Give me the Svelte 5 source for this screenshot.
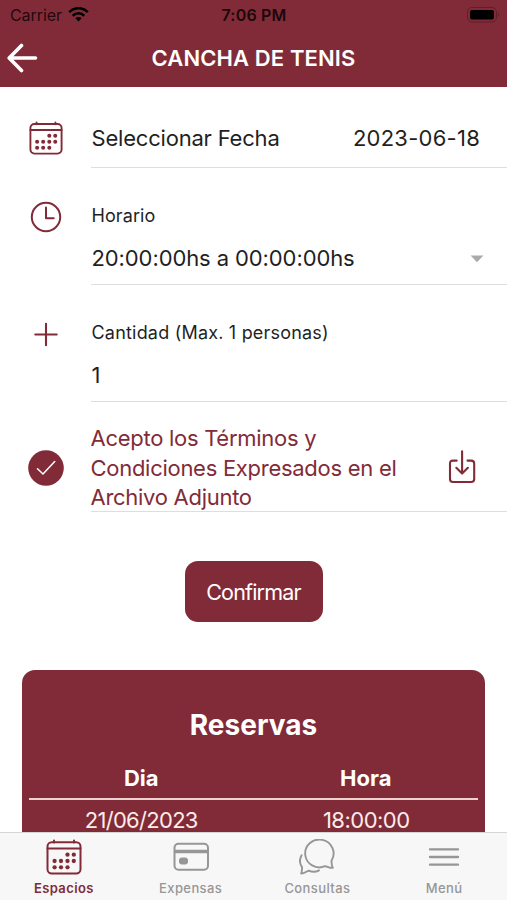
<script>
  const reservas = [{ dia: '21/06/2023', hora: '18:00:00' }];
</script>

{#snippet calendar()}
  <svg class="calendar" viewBox="0 0 36 36" fill="none" stroke="currentColor" stroke-width="2">
    <rect x="1.5" y="3.2" width="33" height="31.3" rx="4.2" />
    <path d="M1.5 9.5H34.5M8 1.5V3.5M28 1.5V3.5" stroke-linecap="round" />
    <g fill="currentColor" stroke="none">
      {#each [[21.5, 15.7], [27.8, 15.7], [8.6, 22], [15, 22], [21.5, 22], [27.8, 22], [8.6, 28.3], [15, 28.3], [21.5, 28.3]] as [x, y]}
        <circle cx={x} cy={y} r="2.15" />
      {/each}
    </g>
  </svg>
{/snippet}

<div class="screen">
  <div class="status">
    <div class="carrier">
      <span>Carrier</span>
      <svg width="21" height="15" viewBox="0 0 21 15" fill="none" stroke="#000" stroke-width="2.6">
        <path d="M1.2 5.1C6.4-.1 14.6-.1 19.8 5.1" />
        <path d="M4.7 8.7C8 5.5 13 5.5 16.3 8.7" />
        <path d="M7.4 11.3C9.2 9.5 11.8 9.5 13.6 11.3L10.5 14.4Z" fill="#000" stroke="none" />
      </svg>
    </div>
    <span class="time">7:06 PM</span>
    <svg class="battery" width="34" height="16" viewBox="0 0 34 16">
      <rect x=".5" y=".5" width="29" height="14.5" rx="4.5" fill="none" stroke="#5e1f2a" />
      <rect x="3" y="3" width="24" height="9.5" rx="2" />
      <path d="M31.2 5.5Q33.4 7.8 31.2 10.1Z" fill="#5e1f2a" />
    </svg>
  </div>

  <header>
    <svg class="back" width="32" height="30" viewBox="0 0 32 30" fill="none" stroke="#fff" stroke-width="3.6" stroke-linecap="round" stroke-linejoin="round">
      <path d="M14.5 2.5L2.2 15L14.5 27.5M3 15H28.5" />
    </svg>
    <h1>CANCHA DE TENIS</h1>
  </header>

  <main>
    <section class="row date">
      <div class="icon">{@render calendar()}</div>
      <div class="body">
        <span class="value pick">Seleccionar Fecha</span>
        <span class="value day">2023-06-18</span>
      </div>
    </section>

    <section class="row field">
      <div class="icon">
        <svg width="32" height="32" viewBox="0 0 32 32" fill="none" stroke="currentColor" stroke-width="2">
          <circle cx="16" cy="16" r="14.2" />
          <path d="M16 6.5V17.2H23.7" stroke-linecap="round" stroke-linejoin="round" />
        </svg>
      </div>
      <div class="body">
        <span class="label horario">Horario</span>
        <div class="select">
          <span class="value hours">20:00:00hs a 00:00:00hs</span>
          <svg width="14" height="8" viewBox="0 0 14 8"><path d="M.6.5H13.4L7 7.2Z" fill="#aaa" /></svg>
        </div>
      </div>
    </section>

    <section class="row field">
      <div class="icon">
        <svg width="32" height="32" viewBox="0 0 32 32" fill="none" stroke="currentColor" stroke-width="2.1" stroke-linecap="round">
          <path d="M16 5.8V27.2M5.3 16.5H26.7" />
        </svg>
      </div>
      <div class="body">
        <span class="label cantidad">Cantidad (Max. 1 personas)</span>
        <span class="value one">1</span>
      </div>
    </section>

    <section class="row terms">
      <div class="icon">
        <svg width="36" height="36" viewBox="0 0 36 36" fill="none">
          <circle cx="18" cy="18" r="17.8" fill="currentColor" />
          <path d="M9.5 18.7L15 24L26.7 11.5" stroke="#fff" stroke-width="1.5" stroke-linecap="round" stroke-linejoin="round" />
        </svg>
      </div>
      <div class="body">
        <p>Acepto los Términos y<br />Condiciones Expresados en el<br />Archivo Adjunto</p>
        <svg class="download" width="28" height="34" viewBox="0 0 28 34" fill="none" stroke="currentColor" stroke-width="2.1" stroke-linecap="round" stroke-linejoin="round">
          <path d="M8.7 10.6H5Q2 10.6 2 13.6V29Q2 32 5 32H23.2Q26.2 32 26.2 29V13.6Q26.2 10.6 23.2 10.6H19.5" />
          <path d="M14.1 1.2V23.3M8.3 17.8L14.1 23.6L19.9 17.8" />
        </svg>
      </div>
    </section>

    <button>Confirmar</button>

    <section class="card">
      <h2>Reservas</h2>
      <div class="cols head">
        <span>Dia</span>
        <span>Hora</span>
      </div>
      {#each reservas as r}
        <div class="cols entry">
          <span class="d">{r.dia}</span>
          <span class="h">{r.hora}</span>
        </div>
      {/each}
    </section>
  </main>

  <nav>
    <div class="tab active">
      {@render calendar()}
      <span>Espacios</span>
    </div>
    <div class="tab">
      <svg width="36" height="36" viewBox="0 0 36 36" fill="none" stroke="currentColor" stroke-width="2">
        <rect x="1.5" y="4.8" width="33.5" height="26" rx="4" />
        <path d="M1.5 12.5H35" stroke-width="3.6" />
        <rect x="6.5" y="19" width="8" height="6" rx="2" fill="currentColor" stroke-width="1" />
      </svg>
      <span>Expensas</span>
    </div>
    <div class="tab">
      <svg width="36" height="36" viewBox="0 0 36 36" fill="none" stroke="currentColor" stroke-width="1.9" stroke-linecap="round" stroke-linejoin="round">
        <path d="M32.6 21.5A14.2 13.9 0 1 0 26 27.2C28.5 27.2 31 29.4 33.8 28.8C32.9 26.6 32.3 24 32.6 21.5Z" />
        <path d="M2.6 16.2C.2 20.4.6 24.6 3 28C3.2 30.3 2.8 32.6 2.2 34.5C5.4 34.6 7.8 32.1 9.6 31.7C13 33.1 17 33.1 20 31.4" />
      </svg>
      <span>Consultas</span>
    </div>
    <div class="tab">
      <svg width="36" height="36" viewBox="0 0 36 36" fill="none" stroke="currentColor" stroke-width="2.3" stroke-linecap="round">
        <path d="M4 10.4H32M4 18H32M4 25.7H32" />
      </svg>
      <span>Menú</span>
    </div>
  </nav>
</div>

<style>
  :global(body) { margin: 0; background: #fff; }
  .screen {
    width: 507px; height: 900px; overflow: hidden;
    display: flex; flex-direction: column;
    background: #fff; color: #1f1f1f;
    font-family: Inter, "Liberation Sans", sans-serif;
  }
  svg { display: block; flex: none; }
  .status {
    height: 30px; flex: none; box-sizing: border-box; padding: 0 6px 0 10px;
    display: grid; grid-template-columns: 1fr auto 1fr; align-items: center;
    background: #822b38; color: #000; font-size: 16px;
  }
  .carrier { display: flex; align-items: center; gap: 6px; color: #23090d; letter-spacing: -.08px; }
  .carrier svg { margin-top: -1px; }
  .time { font-weight: 600; color: #1c070a; letter-spacing: .2px; margin-right: 3px; }
  .battery { justify-self: end; margin-top: -1px; }
  header {
    height: 57px; flex: none; display: grid; grid-template-columns: 60px 1fr 60px;
    align-items: center; background: #822b38; color: #fff;
  }
  .back { margin: -2px 0 0 7px; }
  h1 { margin: -2px 0 0; font-size: 22px; font-weight: 600; letter-spacing: .12px; text-align: center; white-space: nowrap; }
  main { flex: 1; min-height: 0; overflow: hidden; display: flex; flex-direction: column; }
  .row { flex: none; display: flex; box-sizing: border-box; }
  .icon { width: 91px; flex: none; display: flex; justify-content: center; box-sizing: border-box; color: #822b38; }
  .body { flex: 1; border-bottom: 1.5px solid #dedede; box-sizing: border-box; white-space: nowrap; }
  .value { font-size: 22px; line-height: 28px; }
  .label { font-size: 18px; line-height: 24px; display: block; }
  .pick { letter-spacing: -.2px; }
  .day { letter-spacing: .25px; }
  .hours { letter-spacing: -.1px; }
  .horario { letter-spacing: .1px; }
  .cantidad { letter-spacing: .2px; }
  .calendar { width: 36px; height: 36px; }
  .date { height: 81px; }
  .date .icon { padding-top: 34px; padding-left: 1px; }
  .date .calendar { width: 34px; height: 34px; }
  .date .body { display: flex; justify-content: space-between; padding: 37px 27px 0 .5px; }
  .field { height: 117px; }
  .field .icon { padding-top: 33px; padding-left: 1px; }
  .field .body { padding: 36px 0 0 .5px; }
  .select { display: flex; align-items: center; justify-content: space-between; padding: 16px 23px 0 0; }
  .select svg { margin-top: 1px; }
  .one { display: block; margin-top: 16px; }
  .terms { height: 110px; color: #822b38; }
  .terms .icon { align-items: center; padding-top: 21px; }
  .terms .body { display: flex; justify-content: space-between; padding: 20px 31px 0 0; }
  p { margin: 2px 0 0 -.5px; font-size: 22px; line-height: 29.5px; letter-spacing: -.28px; }
  .download { margin-top: 28px; }
  button {
    align-self: center; flex: none; width: 138px; height: 61px; margin: 49px 0 0; padding: 0;
    border: 0; border-radius: 13px; background: #822b38; color: #fff;
    font: 400 21.5px/28px Inter, sans-serif; letter-spacing: -.8px;
  }
  .card {
    flex: 1; min-height: 0; margin: 48px 22px 0; padding: 0 7px; overflow: hidden;
    border-radius: 13px 13px 0 0; background: #822b38; color: #fff;
  }
  h2 { margin: 37px 0 0; font-size: 28px; line-height: 36px; font-weight: 700; text-align: center; }
  .cols { display: grid; grid-template-columns: 1fr 1fr; text-align: center; font-size: 22px; line-height: 28px; }
  .head { margin-top: 21px; padding-bottom: 6px; font-weight: 700; border-bottom: 2px solid #ecd3cf; }
  .entry { padding-top: 10px; line-height: 21px; color: #fbecea; }
  .d { letter-spacing: -.7px; }
  .h { letter-spacing: -.5px; padding-left: 1px; }
  nav {
    height: 68px; flex: none; box-sizing: border-box; border-top: 1.5px solid #d6d6d6;
    background: #f7f7f7; display: grid; grid-template-columns: repeat(4, 1fr);
  }
  .tab { display: flex; flex-direction: column; align-items: center; padding: 6px 0 0 1px; color: #969696; }
  .tab span { font-size: 13px; line-height: 16px; margin-top: 5px; font-weight: 500; letter-spacing: .4px; }
  .active { color: #822b38; }
  .active span { font-weight: 600; }
</style>
